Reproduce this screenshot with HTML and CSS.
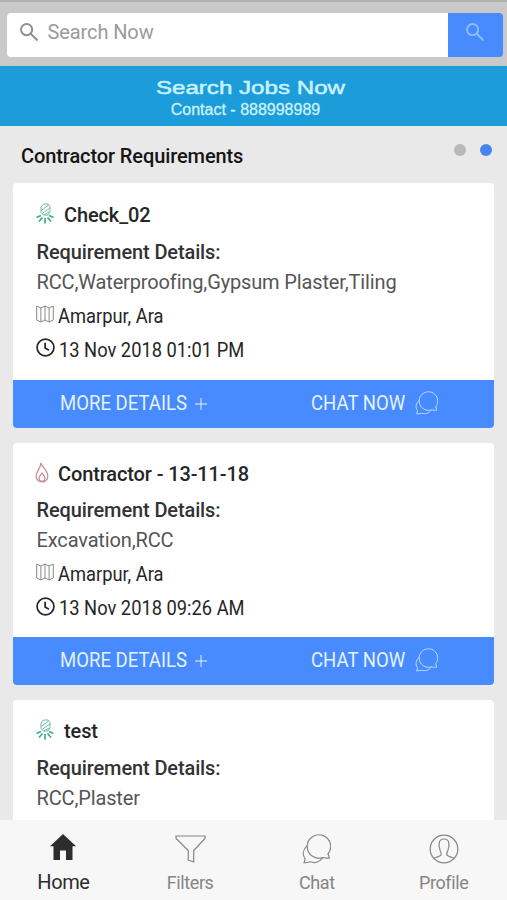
FILE: index.html
```html
<!DOCTYPE html>
<html lang="en">
<head>
<meta charset="utf-8">
<title>Contractor Requirements</title>
<link rel="stylesheet" href="styles.css">
</head>
<body>
<svg class="defs" width="0" height="0" aria-hidden="true">
  <symbol id="search" viewBox="0 0 18 18"><circle cx="6.6" cy="6.6" r="5.6"/><path d="M10.5 10.5L17.500 17.500"/></symbol>
  <symbol id="flare" viewBox="0 0 18 21"><path d="M5 9.500V4l2.500-3H12l2 2.500v5L12 12H7.500zM5.200 7.500L12 2.500M6 10.500L14 5M8 12l5-3"/><path class="rays" d="M9 15v5.500M6.500 14.500L3 18.500M11.500 14.500l3.500 4M5 12.500L.5 14.500M13 12.500l4.500 2"/></symbol>
  <symbol id="flame" viewBox="0 0 14 21"><path d="M6 1c1 4 6.800 7.500 6.800 13 0 3.500-2.400 6-5.800 6s-5.900-2.400-5.900-6C1.100 9.500 6 6 6 1z"/><path d="M7 11c1.400 2 3 3.300 3 5.300S8.700 19.300 7 19.300s-3-1-3-3S5.700 13 7 11z"/></symbol>
  <symbol id="map" viewBox="0 0 18 18"><path d="M.7 1l4.200 2 4.100-2 4.100 2 4.200-2v14l-4.200 2-4.100-2-4.100 2-4.200-2zM4.900 3v14M9 1v14M13.100 3v14"/></symbol>
  <symbol id="clock" viewBox="0 0 20 20"><circle cx="10" cy="10" r="8.900"/><path d="M9.600 5v5.500l4 2.300"/></symbol>
  <symbol id="plus" viewBox="0 0 12 12"><path d="M6 0v12M0 6h12"/></symbol>
  <symbol id="chat" viewBox="0 0 29 30"><path d="M25.500 20.500A11.700 11.700 0 1 0 21 23.500c2 .8 4 .9 6.500.5-.8-1.200-1.200-2.300-1-4"/><path d="M5.500 11.500C.8 15.500.2 20.500 3 24.500c0 1.600-.3 2.800-1 4.200 2.500.2 4-.1 6-.9 5 1.600 9.500.3 12.500-3.800"/></symbol>
  <symbol id="home" viewBox="0 0 26 26"><path d="M13 0l13 12.200h-3.500V26H16v-9.500h-6V26H3.500V12.200H0z"/></symbol>
  <symbol id="filter" viewBox="0 0 31 28"><path d="M1 1h29v2.500L18.700 15.500V27l-5.400-2v-9.500L1 3.500z"/></symbol>
  <symbol id="profile" viewBox="0 0 30 30"><circle cx="15" cy="15" r="13.800"/><path d="M5 24.500c2-1.500 5-1.800 7-3.200.8-1.500.2-3-.9-4.800C9 10 9.800 5 15 5s6 5 3.900 11.500c-1.100 1.800-1.700 3.300-.9 4.800 2 1.400 5 1.700 7 3.200"/></symbol>
</svg>
<div class="screen">
  <header class="topbar">
    <div class="field"><svg class="icon search"><use href="#search"/></svg><span class="hint">Search Now</span></div>
    <button class="go"><svg class="icon search"><use href="#search"/></svg></button>
  </header>
  <section class="banner">
    <div class="banner-title"><span>Search Jobs Now</span></div>
    <div class="banner-contact"><span>Contact - 888998989</span></div>
  </section>
  <div class="heading">
    <h1>Contractor Requirements</h1>
    <div class="dots"><i></i><i class="on"></i></div>
  </div>
  <main class="list">
    <article class="card first">
      <h2><svg class="icon flare"><use href="#flare"/></svg><span class="name">Check_02</span></h2>
      <h3>Requirement Details:</h3>
      <p class="work">RCC,Waterproofing,Gypsum Plaster,Tiling</p>
      <p class="place"><svg class="icon map"><use href="#map"/></svg><span>Amarpur, Ara</span></p>
      <p class="time"><svg class="icon clock"><use href="#clock"/></svg><span>13 Nov 2018 01:01 PM</span></p>
      <footer><a class="more"><span>MORE DETAILS</span><svg class="icon plus"><use href="#plus"/></svg></a><a class="talk"><span>CHAT NOW</span><svg class="icon chat"><use href="#chat"/></svg></a></footer>
    </article>
    <article class="card">
      <h2><svg class="icon flame"><use href="#flame"/></svg><span class="name">Contractor - 13-11-18</span></h2>
      <h3>Requirement Details:</h3>
      <p class="work">Excavation,RCC</p>
      <p class="place"><svg class="icon map"><use href="#map"/></svg><span>Amarpur, Ara</span></p>
      <p class="time"><svg class="icon clock"><use href="#clock"/></svg><span>13 Nov 2018 09:26 AM</span></p>
      <footer><a class="more"><span>MORE DETAILS</span><svg class="icon plus"><use href="#plus"/></svg></a><a class="talk"><span>CHAT NOW</span><svg class="icon chat"><use href="#chat"/></svg></a></footer>
    </article>
    <article class="card">
      <h2><svg class="icon flare"><use href="#flare"/></svg><span class="name">test</span></h2>
      <h3>Requirement Details:</h3>
      <p class="work">RCC,Plaster</p>
    </article>
  </main>
  <nav class="tabs">
    <a class="tab active"><svg class="icon home"><use href="#home"/></svg><span>Home</span></a>
    <a class="tab"><svg class="icon filter"><use href="#filter"/></svg><span>Filters</span></a>
    <a class="tab"><svg class="icon chat"><use href="#chat"/></svg><span>Chat</span></a>
    <a class="tab"><svg class="icon profile"><use href="#profile"/></svg><span>Profile</span></a>
  </nav>
</div>
</body>
</html>
```
FILE: styles.css
```css
* { box-sizing: border-box; margin: 0; padding: 0; }
body { font-family: Roboto, "Liberation Sans", sans-serif; background: #e9e9e9; color: #262626; overflow: hidden; }
.defs { display: none; }
.screen { display: flex; flex-direction: column; height: 900px; width: 507px; }
.icon { fill: none; stroke: currentColor; stroke-width: 1.2; flex: none; overflow: visible; }

.topbar { display: flex; flex: none; height: 66px; padding: 10.500px 4.500px 10px 7px; background: #c9c9c9; border-top: 2px solid #b0b0b0; }
.field { display: flex; align-items: center; flex: 1; height: 44px; padding: 0 0 5px 12.500px; gap: 10px; background: #fff; border-radius: 4px 0 0 4px; }
.icon.search { width: 18px; height: 18px; stroke-width: 2; color: #8f8f8f; }
.hint { font-size: 20px; color: #9b9b9b; letter-spacing: -0.100px; }
.go { display: flex; align-items: center; justify-content: center; width: 55px; height: 44px; padding-bottom: 5px; border: 0; background: #488aff; border-radius: 0 4px 4px 0; }
.go .icon.search { color: #8fc0ff; stroke-width: 1.8; }

.banner { flex: none; height: 60px; padding-top: 11px; background: #1c9dd9; color: #c9f2ff; text-align: center; font-family: "Liberation Sans", Arial, sans-serif; }
.banner span { display: inline-block; }
.banner-title { height: 22px; line-height: 22px; font-size: 19px; -webkit-text-stroke: 0.5px; }
.banner-title span { transform: translateX(-3px) scaleX(1.27); }
.banner-contact { height: 20px; line-height: 21px; font-size: 16px; -webkit-text-stroke: 0.3px; }
.banner-contact span { transform: translateX(-8px); }

.heading { display: flex; flex: none; justify-content: space-between; height: 57px; padding: 0 15.500px 0 21px; }
h1 { font-size: 20px; font-weight: 500; line-height: 60px; color: #151515; white-space: nowrap; letter-spacing: -0.100px; }
.dots { display: flex; gap: 13.500px; padding-top: 18px; }
.dots i { width: 12px; height: 12px; border-radius: 50%; background: #b9b9b9; }
.dots .on { background: #4585ee; }

.list { display: flex; flex-direction: column; flex: 1; min-height: 0; gap: 15px; padding: 0 13px; overflow: hidden; }
.card { flex: none; width: 481px; height: 242px; padding-top: 13px; background: #fff; border-radius: 4px; overflow: hidden; display: flex; flex-direction: column; }
.card.first { height: 245px; padding-top: 14px; }
.card:last-child { height: 245px; }
.card h2, .card h3, .card p { display: flex; align-items: center; flex: none; padding-left: 23.500px; font-size: 20px; white-space: nowrap; letter-spacing: -0.120px; }
.card h2, .card h3 { height: 36px; font-weight: 500; }
.card h3 { color: #333; }
.first h3, .card:last-child h3 { padding-top: 1px; }
.card .work { height: 24px; color: #555; letter-spacing: -0.140px; }
.first .work, .card:last-child .work { padding-top: 2px; }
.card .place, .card .time { gap: 4px; letter-spacing: 0; }
.card .place { height: 44px; }
.card .time { height: 24px; }
.first .place, .first .time { padding-top: 1px; }
.place span, .time span { transform: scaleX(0.915); transform-origin: left; }
.icon.flare { width: 18px; height: 21px; margin: -4px 10.500px 0 -1px; color: #6dbb9f; stroke-width: 1; }
.rays { stroke: #3dae83; stroke-width: 1.700; }
.icon.flame { width: 14px; height: 21px; margin: -4px 9px 0 -1.500px; color: #c98990; }
.icon.map { width: 18px; height: 18px; margin: -4px 0 0 -1px; color: #888; stroke-width: 1; }
.icon.clock { width: 19px; height: 19px; margin: -4px 0 0 -1px; stroke-width: 1.800; }
.card footer { display: flex; height: 48px; margin-top: auto; background: #488aff; color: #e3f3ff; font-size: 20px; }
footer a { display: flex; align-items: center; width: 50%; padding-bottom: 3px; }
footer span { transform: scaleX(0.928); transform-origin: left; }
.more { padding-left: 47px; }
.talk { padding-left: 57.500px; }
.more .icon.plus { width: 12px; height: 12px; margin: 3px 0 0 -2px; stroke-width: 1; }
.talk .icon.chat { width: 23px; height: 24px; margin-left: 2px; color: #bfe0ff; }

.tabs { display: grid; grid-template-columns: repeat(4, 1fr); flex: none; height: 80px; background: #f7f7f7; color: #858585; }
.tab { display: flex; flex-direction: column; align-items: center; justify-content: space-between; padding: 13px 0 5px; font-size: 18px; line-height: 24px; letter-spacing: -0.400px; }
.tab.active { padding-bottom: 6px; color: #2e2c2d; font-size: 20px; }
.icon.home { width: 26px; height: 26px; margin-top: 1px; fill: currentColor; stroke: none; }
.icon.filter { width: 31px; height: 28px; margin-top: 2px; }
.tab .icon.chat { width: 29px; height: 30px; margin-top: 1px; }
.icon.profile { width: 30px; height: 30px; margin-top: 1px; }
```
